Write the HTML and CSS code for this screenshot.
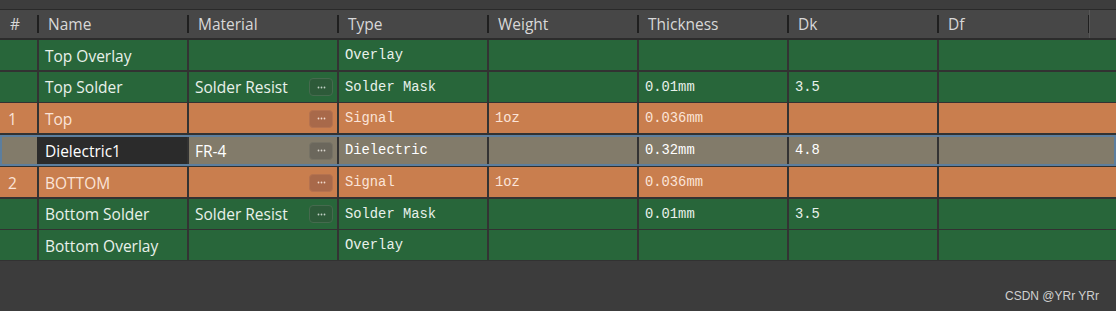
FILE: index.html
```html
<!DOCTYPE html>
<html>
<head>
<meta charset="utf-8">
<link rel="stylesheet" href="styles.css">
</head>
<body>
<div class="panel">
  <div class="strip"></div>
  <div class="header">
    <div class="hc first">#</div>
    <div class="hc">Name</div>
    <div class="hc">Material</div>
    <div class="hc">Type</div>
    <div class="hc">Weight</div>
    <div class="hc">Thickness</div>
    <div class="hc">Dk</div>
    <div class="hc">Df</div>
    <div class="hc tail"></div>
  </div>
  <div class="rows">
    <div class="row green">
      <div class="c num"></div>
      <div class="c">Top Overlay</div>
      <div class="c mat"></div>
      <div class="c mono">Overlay</div>
      <div class="c mono"></div>
      <div class="c mono"></div>
      <div class="c mono"></div>
      <div class="c last"></div>
    </div>
    <div class="row green">
      <div class="c num"></div>
      <div class="c">Top Solder</div>
      <div class="c mat"><span>Solder Resist</span><span class="dots"><svg width="9" height="3" viewBox="0 0 9 3"><circle cx="1.5" cy="1.5" r="0.9"/><circle cx="4.5" cy="1.5" r="0.9"/><circle cx="7.5" cy="1.5" r="0.9"/></svg></span></div>
      <div class="c mono">Solder Mask</div>
      <div class="c mono"></div>
      <div class="c mono">0.01mm</div>
      <div class="c mono">3.5</div>
      <div class="c last"></div>
    </div>
    <div class="row orange">
      <div class="c num">1</div>
      <div class="c">Top</div>
      <div class="c mat"><span></span><span class="dots"><svg width="9" height="3" viewBox="0 0 9 3"><circle cx="1.5" cy="1.5" r="0.9"/><circle cx="4.5" cy="1.5" r="0.9"/><circle cx="7.5" cy="1.5" r="0.9"/></svg></span></div>
      <div class="c mono">Signal</div>
      <div class="c mono">1oz</div>
      <div class="c mono">0.036mm</div>
      <div class="c mono"></div>
      <div class="c last"></div>
    </div>
    <div class="row sel">
      <div class="c num"></div>
      <div class="c edit">Dielectric1</div>
      <div class="c mat"><span>FR-4</span><span class="dots"><svg width="9" height="3" viewBox="0 0 9 3"><circle cx="1.5" cy="1.5" r="0.9"/><circle cx="4.5" cy="1.5" r="0.9"/><circle cx="7.5" cy="1.5" r="0.9"/></svg></span></div>
      <div class="c mono">Dielectric</div>
      <div class="c mono"></div>
      <div class="c mono">0.32mm</div>
      <div class="c mono">4.8</div>
      <div class="c last"></div>
    </div>
    <div class="row orange">
      <div class="c num">2</div>
      <div class="c">BOTTOM</div>
      <div class="c mat"><span></span><span class="dots"><svg width="9" height="3" viewBox="0 0 9 3"><circle cx="1.5" cy="1.5" r="0.9"/><circle cx="4.5" cy="1.5" r="0.9"/><circle cx="7.5" cy="1.5" r="0.9"/></svg></span></div>
      <div class="c mono">Signal</div>
      <div class="c mono">1oz</div>
      <div class="c mono">0.036mm</div>
      <div class="c mono"></div>
      <div class="c last"></div>
    </div>
    <div class="row green">
      <div class="c num"></div>
      <div class="c">Bottom Solder</div>
      <div class="c mat"><span>Solder Resist</span><span class="dots"><svg width="9" height="3" viewBox="0 0 9 3"><circle cx="1.5" cy="1.5" r="0.9"/><circle cx="4.5" cy="1.5" r="0.9"/><circle cx="7.5" cy="1.5" r="0.9"/></svg></span></div>
      <div class="c mono">Solder Mask</div>
      <div class="c mono"></div>
      <div class="c mono">0.01mm</div>
      <div class="c mono">3.5</div>
      <div class="c last"></div>
    </div>
    <div class="row green">
      <div class="c num"></div>
      <div class="c">Bottom Overlay</div>
      <div class="c mat"></div>
      <div class="c mono">Overlay</div>
      <div class="c mono"></div>
      <div class="c mono"></div>
      <div class="c mono"></div>
      <div class="c last"></div>
    </div>
  </div>
  <div class="watermark">CSDN @YRr YRr</div>
</div>
</body>
</html>
```
FILE: styles.css
```css
html, body {
  margin: 0;
  padding: 0;
  background: #3c3c3c;
}
body {
  width: 1116px;
  height: 311px;
  overflow: hidden;
  font-family: "Open Sans", "Noto Sans", sans-serif;
}
.panel {
  position: relative;
  width: 1116px;
  height: 311px;
  background: #3c3c3c;
}
.strip {
  height: 9px;
  background: #3d3d3d;
  border-bottom: 1px solid #2a2a2a;
}
.header {
  display: grid;
  grid-template-columns: 37px repeat(6, 150px) 151px 1fr;
  height: 28px;
  background: #474747;
  border-bottom: 2px solid #2c2c2c;
  color: #d8d8d8;
  font-size: 15.5px;
}
.hc {
  position: relative;
  display: flex;
  align-items: center;
  padding-left: 11px;
}
.hc::before {
  content: "";
  position: absolute;
  left: 0;
  top: 5px;
  height: 18px;
  width: 2px;
  background: #1f1f1f;
}
.hc.first {
  padding-left: 10px;
}
.hc.first::before {
  display: none;
}
.hc.tail::after {
  content: "";
  position: absolute;
  left: 1px;
  top: 0;
  height: 28px;
  width: 1px;
  background: #565656;
}
.rows {
  display: flex;
  flex-direction: column;
  gap: 1.5px;
  background: #323232;
  padding-bottom: 1px;
}
.row {
  display: grid;
  grid-template-columns: 37px repeat(6, 150px) 1fr;
  height: 30px;
  font-size: 15.5px;
}
.c {
  display: flex;
  align-items: center;
  padding-left: 6px;
  padding-top: 1px;
  border-left: 2px solid #333;
  white-space: nowrap;
  overflow: hidden;
}
.c.num {
  border-left: none;
  padding-left: 8px;
}
.mono {
  font-family: "Liberation Mono", "DejaVu Sans Mono", monospace;
  font-size: 13.8px;
}
.mat {
  justify-content: space-between;
  padding-right: 4px;
}
.dots {
  box-sizing: border-box;
  width: 24px;
  height: 18px;
  border-radius: 4px;
  display: flex;
  align-items: center;
  justify-content: center;
}
.dots svg {
  display: block;
  fill: currentColor;
}
.green {
  background: #28663a;
  color: #e8f1ea;
}
.green .dots {
  background: #2d5a39;
  border: 1px solid #456a4e;
  color: #c0d0c4;
}
.orange {
  background: #c97e4e;
  color: #fbe4d8;
}
.orange .dots {
  background: #a8694a;
  border: 1px solid #b5724f;
  color: #f0dacd;
}
.sel {
  background: #827b6a;
  color: #ffffff;
  box-shadow: inset 0 0 0 2px #5c7e9e;
  height: 31px;
}
.sel .c {
  margin: 2px 0;
}
.sel .c.num {
  margin-left: 2px;
}
.sel .edit {
  background: #2b2b2b;
  border-left-color: #2b2b2b;
}
.sel .dots {
  background: #6b675c;
  border: 1px solid #767265;
  color: #d8d4cc;
}
.watermark {
  position: absolute;
  right: 17px;
  bottom: 8px;
  font-family: "Liberation Sans", Arial, sans-serif;
  font-size: 12px;
  color: #cfcfcf;
}
```
